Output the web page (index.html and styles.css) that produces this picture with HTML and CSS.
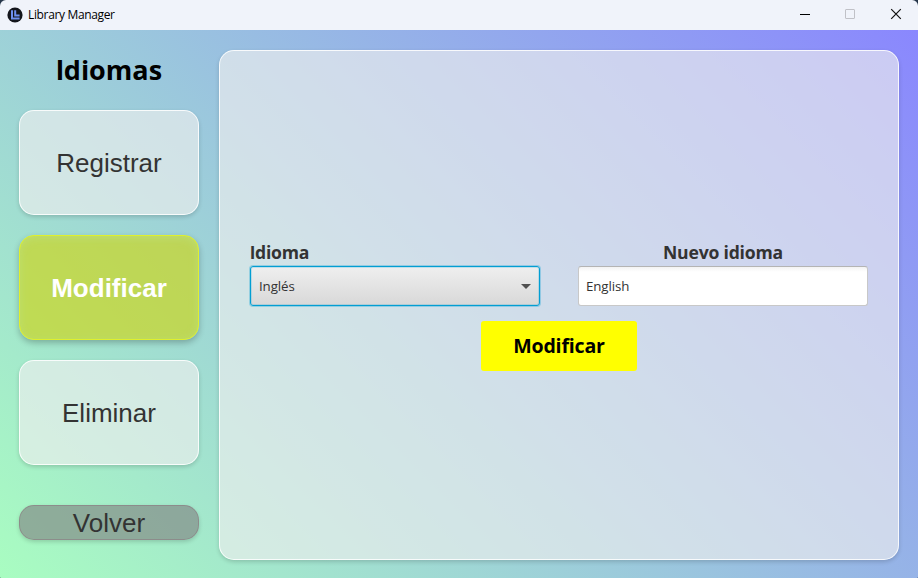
FILE: index.html
```html
<!DOCTYPE html>
<html lang="es">
<head>
<meta charset="utf-8">
<title>Library Manager</title>
<link rel="stylesheet" href="styles.css">
</head>
<body>
<div class="window">
  <header class="titlebar">
    <svg class="logo" width="16" height="16" viewBox="0 0 16 16">
      <circle cx="8" cy="8" r="7.6" fill="#14161c"/>
      <path d="M5 3.2v8.3h7.6M8.2 3.2v5.3h4.4" fill="none" stroke="#6d8ff0" stroke-width="2"/>
    </svg>
    <span class="title">Library Manager</span>
    <svg class="control" width="46" height="30" viewBox="0 0 46 30"><path d="M20 14.5h10" stroke="#000"/></svg>
    <svg class="control" width="46" height="30" viewBox="0 0 46 30"><rect x="19.5" y="9.5" width="9" height="9" rx=".5" fill="none" stroke="#c0c1c7"/></svg>
    <svg class="control" width="46" height="30" viewBox="0 0 46 30"><path d="M19.2 9.2l9.6 9.6M28.8 9.2l-9.6 9.6" stroke="#111" stroke-width="1.2"/></svg>
  </header>
  <main class="content">
    <nav class="sidebar">
      <h1 class="heading"><span class="cap">I</span>diomas</h1>
      <button class="card">Registrar</button>
      <button class="card active">Modificar</button>
      <button class="card">Eliminar</button>
      <button class="card back">Volver</button>
    </nav>
    <section class="panel">
      <div class="fields">
        <div class="field">
          <span class="label"><span class="cap">I</span>dioma</span>
          <div class="combo"><span>Inglés</span><i class="arrow"></i></div>
        </div>
        <div class="field">
          <span class="label centered">Nuevo idioma</span>
          <div class="input">English</div>
        </div>
      </div>
      <button class="submit">Modificar</button>
    </section>
  </main>
</div>
</body>
</html>
```
FILE: styles.css
```css
* { box-sizing: border-box; }
body {
  margin: 0;
  background: #26364a;
  font-family: "Open Sans", "Noto Sans", sans-serif;
}
.window {
  width: 918px;
  height: 578px;
  display: flex;
  flex-direction: column;
  border-radius: 6px 6px 1px 1px;
  overflow: hidden;
}
.titlebar {
  height: 30px;
  flex: none;
  display: flex;
  align-items: center;
  padding-left: 7px;
  background: #f0f3fa;
}
.logo { display: block; margin-top: -1px; }
.title {
  margin: 0 auto 0 5px;
  font-size: 12px;
  line-height: 16px;
  letter-spacing: -0.35px;
  color: #000;
}
.control { display: block; }
.content {
  flex: 1;
  display: flex;
  gap: 20px;
  padding: 20px 19px 18px;
  background: linear-gradient(45deg, #a9fdc1, #8a87fe);
}
.sidebar {
  width: 180px;
  display: flex;
  flex-direction: column;
}
.heading {
  height: 40px;
  margin: 0 0 20px;
  text-align: center;
  font-size: 27px;
  line-height: 40px;
  font-weight: 700;
  color: #000;
}
.cap {
  font-family: Roboto, sans-serif;
  line-height: 1;
}
.card {
  height: 105px;
  margin: 0 0 20px;
  padding: 2px 0 0;
  border: 1px solid rgba(255, 255, 255, 0.85);
  border-radius: 15px;
  background: rgba(238, 238, 238, 0.65);
  box-shadow: 0 2px 4px rgba(0, 0, 0, 0.16);
  font-family: "Liberation Sans", Arial, sans-serif;
  font-size: 26px;
  color: #333;
}
.active {
  border-color: #dff02c;
  background-color: rgba(205, 214, 26, 0.68);
  box-shadow: 0 3px 6px rgba(0, 0, 0, 0.24), inset 0 2px 8px rgba(190, 225, 130, 0.6);
  font-weight: 700;
  color: #fff;
}
.back {
  height: 35px;
  margin: 20px 0 0;
  border-color: rgba(140, 128, 132, 0.7);
  background-color: rgba(128, 128, 128, 0.62);
}
.panel {
  flex: 1;
  display: flex;
  flex-direction: column;
  align-items: center;
  padding: 190px 30px 0;
  border: 1px solid rgba(255, 255, 255, 0.85);
  border-radius: 15px;
  background: rgba(238, 238, 238, 0.65);
  box-shadow: 0 2px 4px rgba(0, 0, 0, 0.16);
}
.fields {
  align-self: stretch;
  display: flex;
  justify-content: space-between;
}
.field {
  width: 290px;
  display: flex;
  flex-direction: column;
}
.label {
  height: 25px;
  line-height: 22px;
  font-size: 17.6px;
  letter-spacing: -0.2px;
  font-weight: 700;
  color: #333;
}
.centered { text-align: center; }
.combo, .input {
  height: 40px;
  display: flex;
  align-items: center;
  justify-content: space-between;
  padding: 0 8px;
  border-radius: 3px;
  font-size: 13.3px;
  letter-spacing: -0.1px;
  color: #333;
}
.combo {
  border: 1px solid #039ed3;
  background: linear-gradient(#efefef, #d8d8d8);
  box-shadow: 0 0 0 1px rgba(3, 158, 211, 0.3), inset 0 0 0 1px rgba(3, 158, 211, 0.2);
}
.arrow {
  margin-top: 1px;
  border: 5px solid transparent;
  border-top-color: #505050;
  border-bottom: 0;
}
.input {
  border: 1px solid #c8c8c8;
  border-top-color: #b4b4b4;
  padding: 0 7px;
  background: linear-gradient(#f3f3f3, #fff 5px);
}
.submit {
  width: 156px;
  height: 50px;
  margin: 15px 0 0;
  padding: 0 0 2px;
  border: 0;
  border-radius: 3px;
  background: #ff0;
  font-family: inherit;
  font-size: 19.6px;
  letter-spacing: -0.2px;
  font-weight: 700;
  color: #000;
}
```
